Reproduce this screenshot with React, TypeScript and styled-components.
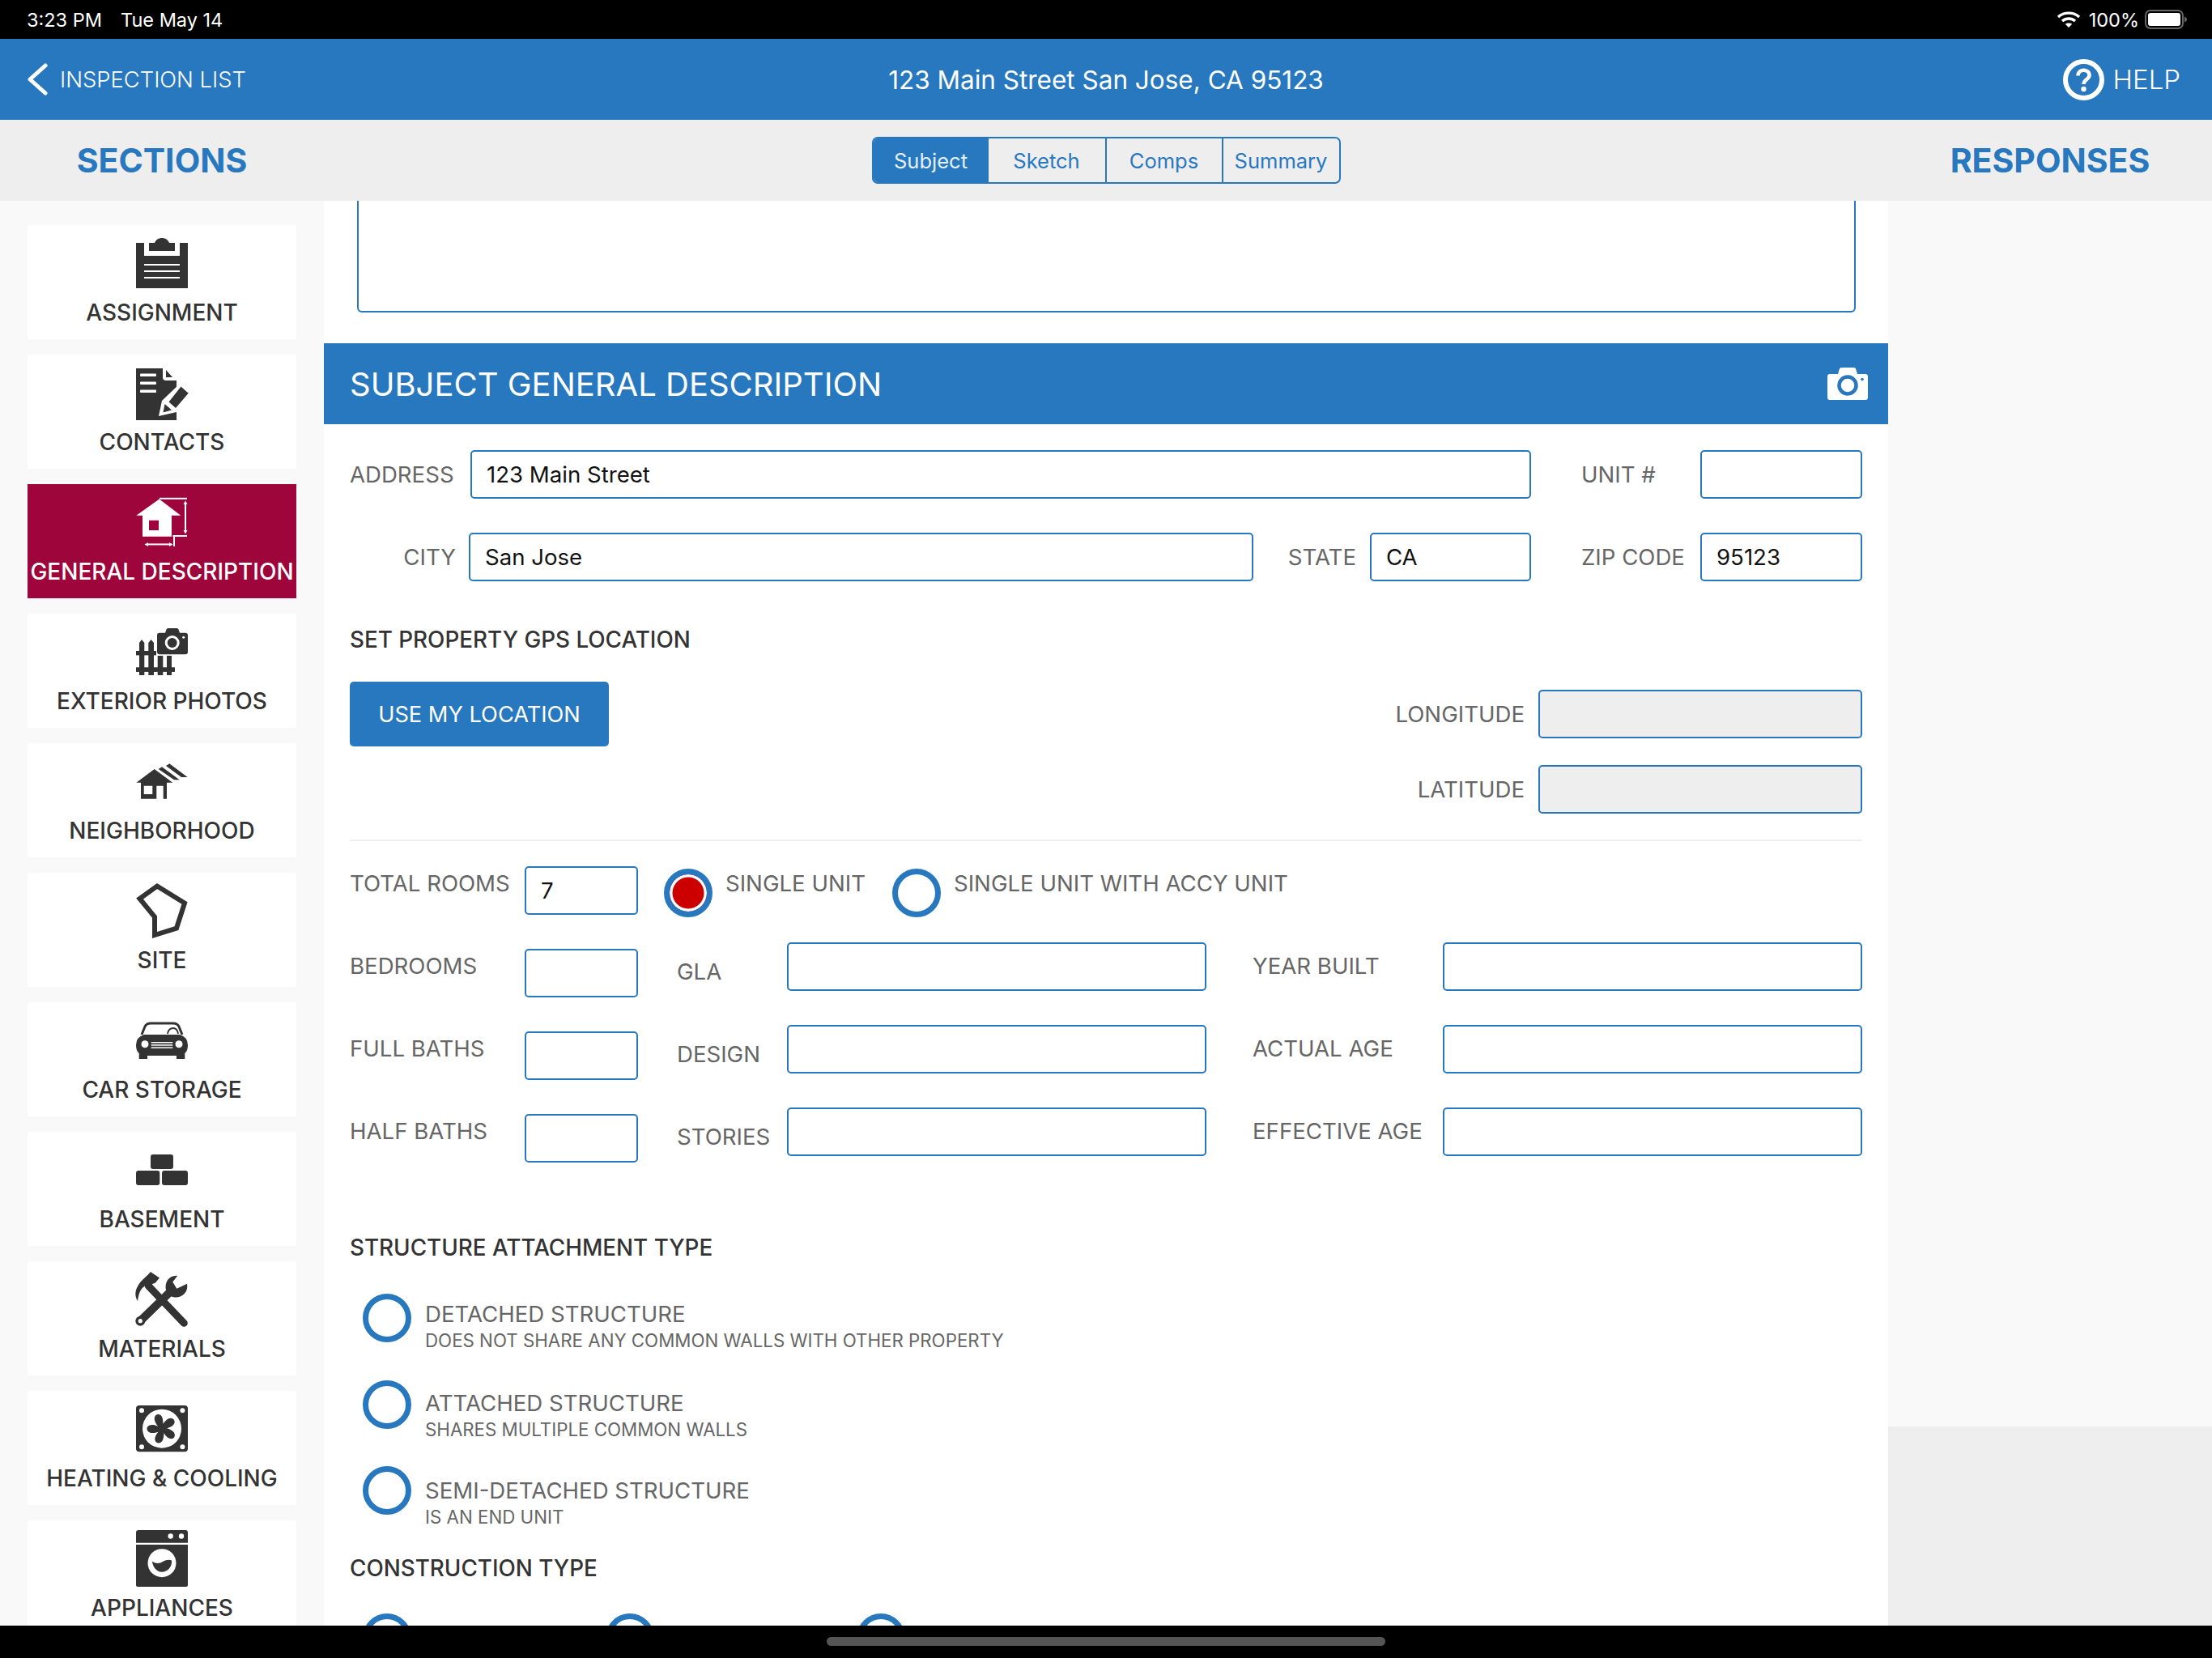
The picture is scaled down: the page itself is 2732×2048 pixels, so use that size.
import React from 'react';
import styled, { createGlobalStyle } from 'styled-components';

const BLUE = '#2778bf';
const FONT = 'Inter, "Noto Sans", "Liberation Sans", sans-serif';

const GlobalStyle = createGlobalStyle`
  html, body {
    margin: 0;
    padding: 0;
    width: 2732px;
    height: 2048px;
    overflow: hidden;
    background: #fff;
    font-family: ${FONT};
  }
  * { box-sizing: border-box; }
`;

const Page = styled.div`
  width: 2732px;
  height: 2048px;
  display: flex;
  flex-direction: column;
  overflow: hidden;
`;

/* status bar */
const StatusBar = styled.div`
  height: 48px;
  flex: none;
  background: #000;
  color: #fff;
  display: flex;
  align-items: center;
  padding: 0 29px 0 33px;
  font-size: 23.5px;
`;
const StatusTime = styled.span`
  margin-right: 23px;
`;
const StatusRight = styled.div`
  margin-left: auto;
  display: flex;
  align-items: center;
`;
const Percent = styled.span`
  margin: 0 7px 0 10px;
`;

/* blue top bar */
const TopBar = styled.div`
  height: 100px;
  flex: none;
  background: ${BLUE};
  color: #fff;
  display: grid;
  grid-template-columns: 1fr auto 1fr;
  align-items: center;
  padding: 0 38px;
`;
const BackLink = styled.div`
  display: flex;
  align-items: center;
  gap: 15px;
  margin-left: -5px;
  font-size: 27.4px;
  font-weight: 300;
`;
const TopTitle = styled.div`
  font-size: 31.5px;
  font-weight: 400;
`;
const HelpLink = styled.div`
  justify-self: end;
  display: flex;
  align-items: center;
  gap: 11px;
  margin-right: 1px;
  font-size: 33px;
  font-weight: 300;
`;

/* grey bar with segments */
const SubBar = styled.div`
  height: 100px;
  flex: none;
  background: #eee;
  display: grid;
  grid-template-columns: 400px 1fr 400px;
  align-items: center;
`;
const ColumnTitle = styled.div`
  text-align: center;
  color: ${BLUE};
  font-size: 41px;
  font-weight: 700;
`;
const Segments = styled.div`
  justify-self: center;
  display: flex;
  height: 58px;
  border: 2px solid ${BLUE};
  border-radius: 7px;
  overflow: hidden;
`;
const Segment = styled.div<{ $active?: boolean; $width: number }>`
  width: ${p => p.$width}px;
  display: flex;
  align-items: center;
  justify-content: center;
  font-size: 25.5px;
  color: ${p => (p.$active ? '#e6f0fa' : BLUE)};
  background: ${p => (p.$active ? BLUE : 'transparent')};
  border-left: ${p => (p.$active ? '0' : `2px solid ${BLUE}`)};
  &:nth-child(2) { border-left: 0; }
`;

/* three columns */
const Columns = styled.div`
  flex: 1;
  min-height: 0;
  display: grid;
  grid-template-columns: 400px 1fr 400px;
`;

/* sections */
const Sidebar = styled.div`
  background: #f9f9f9;
  padding: 30px 34px 0;
  display: flex;
  flex-direction: column;
  gap: 19px;
  overflow: hidden;
`;
const SectionCard = styled.div<{ $active?: boolean }>`
  height: 141px;
  flex: none;
  display: flex;
  flex-direction: column;
  align-items: center;
  padding-top: 8px;
  background: ${p => (p.$active ? '#9e053b' : '#fff')};
  color: ${p => (p.$active ? '#fff' : '#333')};
`;
const IconArt = styled.svg`
  width: 68px;
  height: 80px;
  flex: none;
  fill: currentColor;
`;
const SectionLabel = styled.div`
  font-size: 28px;
  line-height: 34px;
  font-weight: 500;
  white-space: nowrap;
  margin-top: 3px;
`;

/* main form */
const Main = styled.div`
  background: #fff;
  overflow: hidden;
`;
const NotesBox = styled.div`
  height: 138px;
  margin: 0 40px 0 41px;
  border: 2px solid ${BLUE};
  border-top: 0;
  border-radius: 0 0 6px 6px;
`;
const SectionBar = styled.div`
  margin-top: 38px;
  height: 100px;
  background: ${BLUE};
  color: #fff;
  display: flex;
  align-items: center;
  justify-content: space-between;
  padding: 0 25px 0 32px;
  font-size: 40px;
  font-weight: 400;
`;
const Form = styled.div`
  padding: 32px 32px 0;
`;
const FieldRow = styled.div<{ $columns: string; $top?: number }>`
  display: grid;
  grid-template-columns: ${p => p.$columns};
  align-items: center;
  margin-top: ${p => p.$top ?? 0}px;
`;
const Label = styled.div<{ $right?: boolean; $pad?: number }>`
  color: #666;
  font-size: 27.6px;
  line-height: 34px;
  white-space: nowrap;
  text-align: ${p => (p.$right ? 'right' : 'left')};
  padding-left: ${p => (p.$right ? 0 : p.$pad ?? 0)}px;
  padding-right: ${p => (p.$right ? p.$pad ?? 0 : 0)}px;
`;
const Input = styled.input<{ $grey?: boolean }>`
  width: 100%;
  height: 60px;
  border: 2px solid ${BLUE};
  border-radius: 5px;
  padding: 0 18px;
  font-family: ${FONT};
  font-size: 27.6px;
  color: #111;
  outline: none;
  background: ${p => (p.$grey ? '#eee' : '#fff')};
`;
const BlockTitle = styled.div<{ $top: number }>`
  margin-top: ${p => p.$top}px;
  color: #333;
  font-size: 27.8px;
  line-height: 34px;
  font-weight: 500;
`;
const GpsBlock = styled.div`
  margin-top: 35px;
  display: flex;
  justify-content: space-between;
  align-items: flex-start;
`;
const LocationButton = styled.div`
  width: 320px;
  height: 80px;
  background: ${BLUE};
  border-radius: 5px;
  color: #fff;
  font-size: 27.2px;
  display: flex;
  align-items: center;
  justify-content: center;
`;
const CoordGrid = styled.div`
  margin-top: 10px;
  width: 600px;
  display: grid;
  grid-template-columns: 200px 400px;
  row-gap: 33px;
  align-items: center;
`;
const Divider = styled.div`
  margin-top: 32px;
  height: 2px;
  background: #eee;
`;
const RoomsRow = styled.div`
  margin-top: 31px;
  display: flex;
  align-items: flex-start;
  height: 60px;
`;
const RoomsLabel = styled(Label)`
  width: 216px;
  flex: none;
  margin-top: 4px;
`;
const SmallInput = styled(Input)`
  width: 140px;
  flex: none;
`;
const Radio = styled.div<{ $on?: boolean }>`
  width: 60px;
  height: 60px;
  flex: none;
  border-radius: 50%;
  border: 7px solid ${BLUE};
  background: ${p => (p.$on ? '#cc0000' : '#fff')};
  box-shadow: ${p => (p.$on ? 'inset 0 0 0 3.5px #fff' : 'none')};
`;
const RoomsRadio = styled(Radio)<{ $left: number }>`
  margin: 3px 0 0 ${p => p.$left}px;
`;
const RadioText = styled(Label)`
  margin: 4px 0 0 16px;
`;
const StatGrid = styled.div`
  margin-top: 34px;
  display: grid;
  grid-template-columns: 216px 140px 48px 136px 518px 57px 235px 518px;
  row-gap: 34px;
  align-items: start;
`;
const StatLabel = styled(Label)<{ $drop: number }>`
  margin-top: ${p => p.$drop}px;
`;
const StatSmall = styled(Input)`
  margin-top: 8px;
`;
const Option = styled.div<{ $height: number }>`
  height: ${p => p.$height}px;
  display: flex;
  align-items: flex-start;
  padding-left: 16px;
`;
const OptionList = styled.div`
  margin-top: 40px;
`;
const OptionText = styled.div<{ $drop: number }>`
  margin: ${p => p.$drop}px 0 0 17px;
`;
const OptionSub = styled.div`
  color: #666;
  font-size: 22.3px;
  line-height: 28px;
  margin-top: 2px;
  white-space: nowrap;
`;
const ConstructionRow = styled.div`
  margin-top: 39px;
  padding-left: 16px;
  display: flex;
`;
const ConstructionCell = styled.div<{ $width: number }>`
  width: ${p => p.$width}px;
`;

/* responses */
const Responses = styled.div`
  background: #eee;
`;
const ResponsesTop = styled.div`
  height: 1514px;
  background: #f9f9f9;
`;

const HomeBar = styled.div`
  height: 40px;
  flex: none;
  background: #000;
  display: flex;
  justify-content: center;
  padding-top: 14px;
`;
const HomeIndicator = styled.div`
  width: 690px;
  height: 11px;
  border-radius: 6px;
  background: #555;
`;

/* drawings */
const Wifi = () => (
  <svg width="30" height="22" viewBox="0 0 30 22" fill="none" stroke="#fff" strokeWidth="3.4">
    <path d="M2 8 C9 1.5 21 1.5 28 8" />
    <path d="M7 13 C11.5 9 18.5 9 23 13" />
    <path d="M15 21 L10.8 16.8 C13 15 17 15 19.2 16.8 Z" fill="#fff" stroke="none" />
  </svg>
);

const Battery = () => (
  <svg width="54" height="24" viewBox="0 0 54 24">
    <rect x="1" y="1" width="46" height="22" rx="6" fill="none" stroke="#666" strokeWidth="2" />
    <rect x="4" y="4" width="40" height="16" rx="3" fill="#fff" />
    <path d="M49 8.5 C51 9.2 52 10.5 52 12 C52 13.5 51 14.8 49 15.5 Z" fill="#666" />
  </svg>
);

const BackChevron = () => (
  <svg width="26" height="40" viewBox="0 0 26 40" fill="none" stroke="#fff" strokeWidth="5" strokeLinecap="round" strokeLinejoin="round">
    <path d="M23 3 L4 20 L23 37" />
  </svg>
);

const HelpIcon = () => (
  <svg width="51" height="51" viewBox="0 0 51 51" fill="none" stroke="#fff">
    <circle cx="25.5" cy="25.5" r="22.5" strokeWidth="6" />
    <path d="M18.5 20.5 C18.5 11.5 32.5 11.5 32.5 20 C32.5 25 25.5 25 25.5 31" strokeWidth="4.6" />
    <circle cx="25.5" cy="37" r="3.2" fill="#fff" stroke="none" />
  </svg>
);

const BarCamera = () => (
  <svg width="50" height="40" viewBox="0 0 50 40">
    <path d="M3 8 H13 L15 1.5 Q15.5 0 17 0 H33 Q34.5 0 35 1.5 L37 8 H47 Q50 8 50 11 V37 Q50 40 47 40 H3 Q0 40 0 37 V11 Q0 8 3 8 Z" fill="#fff" />
    <circle cx="25" cy="22" r="10.5" fill="none" stroke={BLUE} strokeWidth="4.5" />
    <circle cx="43" cy="14.5" r="1.8" fill={BLUE} />
  </svg>
);

const Art = ({ children }: { children: React.ReactNode }) => <IconArt viewBox="0 0 68 80">{children}</IconArt>;

const AssignmentIcon = () => (
  <Art>
    <path d="M2 14 H12 V30 H56 V14 H66 V70 H2 Z" />
    <path d="M18 14 H25 C26.5 10 30 8 34 8 C38 8 41.5 10 43 14 H50 V24 H18 Z" />
    <rect x="12" y="40" width="44" height="2" fill="#fff" />
    <rect x="12" y="48" width="44" height="2" fill="#fff" />
    <rect x="12" y="56" width="44" height="2" fill="#fff" />
  </Art>
);

const ContactsIcon = () => (
  <Art>
    <path d="M2 9 H35 V20 Q35 24 39 24 H52 V73 H2 Z" />
    <path d="M39 11 L47 20 H39 Z" />
    <rect x="7" y="15.5" width="20" height="3.4" rx="1" fill="#fff" />
    <rect x="7" y="25.5" width="20" height="3.4" rx="1" fill="#fff" />
    <rect x="7" y="35.5" width="20" height="3.4" rx="1" fill="#fff" />
    <path d="M30 68 L34 49 L57 27 L70 39 L52 63 Z" fill="#fff" />
    <path d="M57.5 31.5 L66.7 39.7 L51 58 L42.5 50.5 Z" />
    <path d="M37.5 53 L46 60.5 L35.5 63.5 Z" />
  </Art>
);

const GeneralIcon = () => (
  <Art>
    <path fillRule="evenodd" d="M30.7 10.5 L2.3 30.7 H10 V56.7 H46 V30.7 H57.3 Z M18 36.7 V49 H30 V36.7 Z" />
    <rect x="31" y="8.8" width="34" height="2" />
    <rect x="62" y="15" width="2" height="36" />
    <path d="M63 12.5 L65.5 17 H60.5 Z M63 53.5 L65.5 49 H60.5 Z" />
    <rect x="47.5" y="55" width="17.5" height="2" />
    <rect x="48" y="56" width="2" height="13" />
    <rect x="15" y="65.4" width="31" height="2" />
    <path d="M12.5 66.4 L17 64 V69 Z M47.5 66.4 L43 64 V69 Z" />
  </Art>
);

const ExteriorIcon = () => (
  <Art>
    <path d="M6 68 V28 L9 24 L12.3 28 V68 Z" />
    <path d="M17.3 68 V28 L20.6 24 L24 28 V68 Z" />
    <rect x="28.7" y="44" width="6.6" height="24" />
    <rect x="40" y="44" width="6" height="24" />
    <rect x="2" y="38" width="25" height="5.4" />
    <rect x="2" y="58.3" width="48" height="5.6" />
    <path d="M31 15.7 H38 L39.5 11.5 Q40 10 41.5 10 H52.5 Q54 10 54.5 11.5 L56 15.7 H63 Q66 15.7 66 18.7 V39.3 Q66 42.3 63 42.3 H31 Q28 42.3 28 39.3 V18.7 Q28 15.7 31 15.7 Z" />
    <circle cx="46.7" cy="28" r="7.5" fill="none" stroke="#fff" strokeWidth="3" />
    <circle cx="60.7" cy="21.3" r="1.5" fill="#fff" />
  </Art>
);

const NeighborhoodIcon = () => (
  <Art>
    <path fillRule="evenodd" d="M24.7 24 L2.3 40.7 H8 V60.7 H27.3 V44.7 H35.7 V60.7 H40 V40.7 H47.3 Z M11.7 44.7 V55 H22.3 V44.7 Z" />
    <path d="M29.7 24 L34 21.3 L55.7 37.3 H49 Z" />
    <path d="M39 20 L43.3 17.3 L65.7 34 H58 Z" />
  </Art>
);

const SiteIcon = () => (
  <Art>
    <path d="M28 8.5 L62 29.5 L52 60.5 L25 69 V46.5 L6.5 24 Z" fill="none" stroke="currentColor" strokeWidth="6" />
  </Art>
);

const CarIcon = () => (
  <Art>
    <path d="M9 32 L13 22 Q15 18 20 18 H48 Q53 18 55 22 L59 32" fill="none" stroke="currentColor" strokeWidth="3" />
    <path d="M41 31 Q42 24 48 24 Q53 24 54 31" fill="none" stroke="currentColor" strokeWidth="1.8" />
    <path d="M12 32 H56 Q66 35 66 45 Q66 52 62.3 55 V62 H52 V58 H16 V62 H5.7 V55 Q2 52 2 45 Q2 35 12 32 Z" />
    <circle cx="13" cy="43.7" r="4.5" fill="#fff" />
    <circle cx="55" cy="43.7" r="4.5" fill="#fff" />
    <rect x="20.7" y="41" width="26.6" height="1.5" fill="#fff" />
    <rect x="20.7" y="44.2" width="26.6" height="1.5" fill="#fff" />
    <rect x="20.7" y="47.4" width="26.6" height="1.5" fill="#fff" />
  </Art>
);

const BasementIcon = () => (
  <Art>
    <rect x="20" y="20" width="28" height="18" rx="3" />
    <rect x="2" y="40" width="29.3" height="18" rx="3" />
    <rect x="34" y="40" width="32" height="18" rx="3" />
  </Art>
);

const MaterialsIcon = () => (
  <Art>
    <path d="M17.3 22.3 L61.3 68.3" fill="none" stroke="currentColor" strokeWidth="9" strokeLinecap="round" />
    <path d="M20 5 L31 12.5 L25.5 19 L23 19.5 L17 26 L13 22.5 C8 25 5 32 4 41 C0 35 1 28 4 23 C8 15 14 12 20 5 Z" />
    <path d="M48 26 L7.3 65.7" fill="none" stroke="currentColor" strokeWidth="10" />
    <path fillRule="evenodd" d="M53.3 9.7 L47.3 17.5 L52.3 25.7 L65 19.7 C67 30 59 37 50 36.4 C42 36 38 29 38.6 22.5 C39.5 14 45 9.5 53.3 9.7 Z" />
    <circle cx="7.3" cy="65.7" r="6" />
    <circle cx="7.3" cy="65.7" r="2.6" fill="#fff" />
  </Art>
);

const HeatingIcon = () => (
  <Art>
    <rect x="2" y="10" width="64" height="57.3" rx="4" />
    <circle cx="34" cy="38.7" r="24" fill="#fff" />
    {[[9, 16.3], [59.4, 16.3], [9, 61.3], [59.4, 61.3]].map(([x, y]) => (
      <circle key={`${x}-${y}`} cx={x} cy={y} r="3" fill="#fff" />
    ))}
    <g transform="translate(34 38.7)">
      {[-15, 57, 129, 201, 273].map(a => (
        <path key={a} transform={`rotate(${a})`} d="M-2.5 0 C-6 -8 -8 -15 -3 -18 C2 -20 6 -15 3 -6 L2.5 0 Z" />
      ))}
      <circle r="5" />
    </g>
  </Art>
);

const AppliancesIcon = () => (
  <Art>
    <path d="M5 4 H63 Q66 4 66 7 V19.7 H2 V7 Q2 4 5 4 Z" />
    <circle cx="44.7" cy="11.5" r="3.2" fill="#fff" />
    <circle cx="58" cy="11.5" r="3.2" fill="#fff" />
    <path d="M2 22 H66 V72 Q66 74 64 74 H4 Q2 74 2 72 Z" />
    <circle cx="34" cy="44.7" r="17.5" fill="#fff" />
    <path d="M22 42.5 C27 46 31 45.5 35 43 C39 41 43 40 46 41.5 C47 49 41 55.7 34 55.7 C27 55.7 22.5 49 22 42.5 Z" />
  </Art>
);

const sections = [
  { label: 'ASSIGNMENT', icon: <AssignmentIcon /> },
  { label: 'CONTACTS', icon: <ContactsIcon /> },
  { label: 'GENERAL DESCRIPTION', icon: <GeneralIcon />, active: true },
  { label: 'EXTERIOR PHOTOS', icon: <ExteriorIcon /> },
  { label: 'NEIGHBORHOOD', icon: <NeighborhoodIcon /> },
  { label: 'SITE', icon: <SiteIcon /> },
  { label: 'CAR STORAGE', icon: <CarIcon /> },
  { label: 'BASEMENT', icon: <BasementIcon /> },
  { label: 'MATERIALS', icon: <MaterialsIcon /> },
  { label: 'HEATING & COOLING', icon: <HeatingIcon /> },
  { label: 'APPLIANCES', icon: <AppliancesIcon /> },
];

const segments = [
  { label: 'Subject', width: 142, active: true },
  { label: 'Sketch', width: 144 },
  { label: 'Comps', width: 144 },
  { label: 'Summary', width: 145 },
];

const stats = [
  { left: 'BEDROOMS', mid: 'GLA', right: 'YEAR BUILT' },
  { left: 'FULL BATHS', mid: 'DESIGN', right: 'ACTUAL AGE' },
  { left: 'HALF BATHS', mid: 'STORIES', right: 'EFFECTIVE AGE' },
];

const attachments = [
  { title: 'DETACHED STRUCTURE', sub: 'DOES NOT SHARE ANY COMMON WALLS WITH OTHER PROPERTY', height: 107, drop: 8 },
  { title: 'ATTACHED STRUCTURE', sub: 'SHARES MULTIPLE COMMON WALLS', height: 106, drop: 11 },
  { title: 'SEMI-DETACHED STRUCTURE', sub: 'IS AN END UNIT', height: 108, drop: 13 },
];

const App = () => {
  return (
    <Page>
      <GlobalStyle />
      <StatusBar>
        <StatusTime>3:23 PM</StatusTime>
        <span>Tue May 14</span>
        <StatusRight>
          <Wifi />
          <Percent>100%</Percent>
          <Battery />
        </StatusRight>
      </StatusBar>

      <TopBar>
        <BackLink>
          <BackChevron />
          INSPECTION LIST
        </BackLink>
        <TopTitle>123 Main Street San Jose, CA 95123</TopTitle>
        <HelpLink>
          <HelpIcon />
          HELP
        </HelpLink>
      </TopBar>

      <SubBar>
        <ColumnTitle>SECTIONS</ColumnTitle>
        <Segments>
          {segments.map(s => (
            <Segment key={s.label} $active={s.active} $width={s.width}>{s.label}</Segment>
          ))}
        </Segments>
        <ColumnTitle>RESPONSES</ColumnTitle>
      </SubBar>

      <Columns>
        <Sidebar>
          {sections.map(s => (
            <SectionCard key={s.label} $active={s.active}>
              {s.icon}
              <SectionLabel>{s.label}</SectionLabel>
            </SectionCard>
          ))}
        </Sidebar>

        <Main>
          <NotesBox />
          <SectionBar>
            SUBJECT GENERAL DESCRIPTION
            <BarCamera />
          </SectionBar>
          <Form>
            <FieldRow $columns="149px 1310px 1fr 200px">
              <Label>ADDRESS</Label>
              <Input readOnly value="123 Main Street" />
              <Label $pad={62}>UNIT #</Label>
              <Input readOnly value="" />
            </FieldRow>
            <FieldRow $columns="147px 969px 144px 199px 1fr 200px" $top={42}>
              <Label $right $pad={16}>CITY</Label>
              <Input readOnly value="San Jose" />
              <Label $right $pad={17}>STATE</Label>
              <Input readOnly value="CA" />
              <Label $pad={62}>ZIP CODE</Label>
              <Input readOnly value="95123" />
            </FieldRow>

            <BlockTitle $top={55}>SET PROPERTY GPS LOCATION</BlockTitle>
            <GpsBlock>
              <LocationButton>USE MY LOCATION</LocationButton>
              <CoordGrid>
                <Label $right $pad={17}>LONGITUDE</Label>
                <Input $grey readOnly value="" />
                <Label $right $pad={17}>LATITUDE</Label>
                <Input $grey readOnly value="" />
              </CoordGrid>
            </GpsBlock>
            <Divider />

            <RoomsRow>
              <RoomsLabel>TOTAL ROOMS</RoomsLabel>
              <SmallInput readOnly value="7" />
              <RoomsRadio $on $left={32} />
              <RadioText>SINGLE UNIT</RadioText>
              <RoomsRadio $left={33} />
              <RadioText>SINGLE UNIT WITH ACCY UNIT</RadioText>
            </RoomsRow>

            <StatGrid>
              {stats.map(row => (
                <React.Fragment key={row.left}>
                  <StatLabel $drop={12}>{row.left}</StatLabel>
                  <StatSmall readOnly value="" />
                  <span />
                  <StatLabel $drop={19}>{row.mid}</StatLabel>
                  <Input readOnly value="" />
                  <span />
                  <StatLabel $drop={12}>{row.right}</StatLabel>
                  <Input readOnly value="" />
                </React.Fragment>
              ))}
            </StatGrid>

            <BlockTitle $top={88}>STRUCTURE ATTACHMENT TYPE</BlockTitle>
            <OptionList>
              {attachments.map(a => (
                <Option key={a.title} $height={a.height}>
                  <Radio />
                  <OptionText $drop={a.drop}>
                    <Label>{a.title}</Label>
                    <OptionSub>{a.sub}</OptionSub>
                  </OptionText>
                </Option>
              ))}
            </OptionList>

            <BlockTitle $top={1}>CONSTRUCTION TYPE</BlockTitle>
            <ConstructionRow>
              <ConstructionCell $width={300}><Radio /></ConstructionCell>
              <ConstructionCell $width={310}><Radio /></ConstructionCell>
              <ConstructionCell $width={60}><Radio /></ConstructionCell>
            </ConstructionRow>
          </Form>
        </Main>

        <Responses>
          <ResponsesTop />
        </Responses>
      </Columns>

      <HomeBar>
        <HomeIndicator />
      </HomeBar>
    </Page>
  );
};

export default App;
